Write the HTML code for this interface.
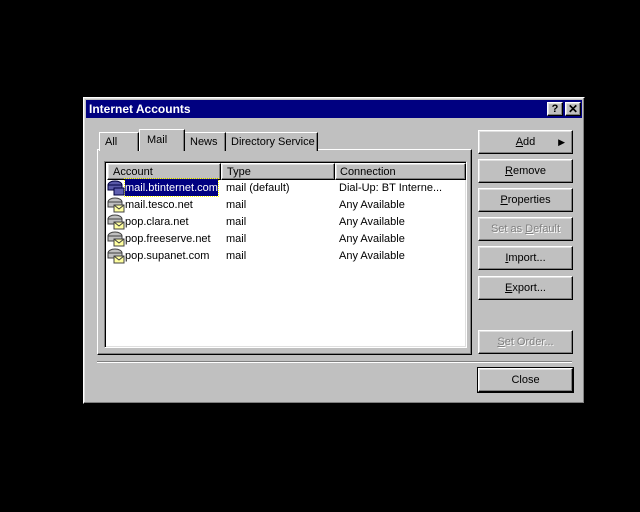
<html><head><style>
body{margin:0;width:640px;height:512px;background:#000;position:relative;overflow:hidden;font-family:"Liberation Sans",sans-serif;font-size:11px}
div{position:absolute;box-sizing:border-box}
.out{background:#c0c0c0;border:1px solid;border-color:#fff #000 #000 #fff;box-shadow:inset -1px -1px #808080,inset 1px 1px #dfdfdf}
.btn{left:478px;width:95px;height:24px;text-align:center;line-height:22px;color:#000}
.dis{color:#808080;text-shadow:1px 1px #fff}
.tab{top:132px;height:19px;background:#c0c0c0;border:1px solid;border-bottom:none;border-color:#fff #000 #000 #fff;box-shadow:inset -1px 0 #808080;line-height:18px;padding-left:5px}
.row{left:0;height:17px;line-height:18px;white-space:nowrap}
u{text-decoration:underline}
</style></head><body>
<div class="out" style="left:83px;top:97px;width:502px;height:307px"></div>
<div style="left:86px;top:100px;width:496px;height:18px;background:#000080;color:#fff;font-weight:bold;font-size:12px;line-height:18px;padding-left:3px">Internet Accounts</div>
<div class="out" style="left:547px;top:102px;width:16px;height:14px;font-weight:bold;text-align:center;line-height:12px;font-size:11px">?</div>
<div class="out" style="left:565px;top:102px;width:16px;height:14px;font-weight:bold;text-align:center;line-height:12px;font-size:12px">✕</div>
<div style="left:97px;top:149px;width:375px;height:206px;border:1px solid;border-color:#fff #000 #000 #fff;box-shadow:inset -1px -1px #808080"></div>
<div class="tab" style="left:99px;width:40px">All</div>
<div class="tab" style="left:225px;width:93px">Directory Service</div>
<div class="tab" style="left:184px;width:42px">News</div>
<div class="tab" style="left:139px;top:129px;height:22px;width:46px;padding-left:7px;line-height:20px;z-index:2">Mail</div>
<div style="left:104px;top:161px;width:363px;height:187px;background:#fff;border:1px solid;border-color:#808080 #fff #fff #808080;box-shadow:inset 1px 1px #000,inset -1px -1px #dfdfdf">
 <div class="out" style="left:2px;top:1px;width:114px;height:17px;line-height:16px;padding-left:5px">Account</div>
 <div class="out" style="left:116px;top:1px;width:114px;height:17px;line-height:16px;padding-left:5px">Type</div>
 <div class="out" style="left:230px;top:1px;width:131px;height:17px;line-height:16px;padding-left:4px">Connection</div>
</div>
<div style="left:106px;top:179px;width:359px;height:90px">
 <div class="row" style="top:0"><div style="left:19px;top:0;width:93px;height:17px;background:#000080;color:#fff;outline:1px dotted #ff0">mail.btinternet.com</div><div style="left:120px">mail (default)</div><div style="left:233px">Dial-Up: BT Interne...</div></div>
 <div class="row" style="top:17px"><div style="left:19px">mail.tesco.net</div><div style="left:120px">mail</div><div style="left:233px">Any Available</div></div>
 <div class="row" style="top:34px"><div style="left:19px">pop.clara.net</div><div style="left:120px">mail</div><div style="left:233px">Any Available</div></div>
 <div class="row" style="top:51px"><div style="left:19px">pop.freeserve.net</div><div style="left:120px">mail</div><div style="left:233px">Any Available</div></div>
 <div class="row" style="top:68px"><div style="left:19px">pop.supanet.com</div><div style="left:120px">mail</div><div style="left:233px">Any Available</div></div>
</div>
<svg style="position:absolute;left:107px;top:179px" width="18" height="86">
 <g><ellipse cx="8" cy="6" rx="7" ry="4" fill="#5a5aa8" stroke="#000040"/><rect x="1" y="6" width="14" height="5" fill="#5a5aa8" stroke="#000040"/><rect x="7" y="9" width="10" height="7" fill="#6060b0" stroke="#000040"/></g>
 <g transform="translate(0,17)"><ellipse cx="8" cy="6" rx="7" ry="4" fill="#c0c0c0" stroke="#404040"/><rect x="1" y="6" width="14" height="5" fill="#c0c0c0" stroke="#404040"/><rect x="7" y="9" width="10" height="7" fill="#ffffa0" stroke="#404040"/><path d="M7 9l5 4 5-4" fill="none" stroke="#404040"/></g>
 <g transform="translate(0,34)"><ellipse cx="8" cy="6" rx="7" ry="4" fill="#c0c0c0" stroke="#404040"/><rect x="1" y="6" width="14" height="5" fill="#c0c0c0" stroke="#404040"/><rect x="7" y="9" width="10" height="7" fill="#ffffa0" stroke="#404040"/><path d="M7 9l5 4 5-4" fill="none" stroke="#404040"/></g>
 <g transform="translate(0,51)"><ellipse cx="8" cy="6" rx="7" ry="4" fill="#c0c0c0" stroke="#404040"/><rect x="1" y="6" width="14" height="5" fill="#c0c0c0" stroke="#404040"/><rect x="7" y="9" width="10" height="7" fill="#ffffa0" stroke="#404040"/><path d="M7 9l5 4 5-4" fill="none" stroke="#404040"/></g>
 <g transform="translate(0,68)"><ellipse cx="8" cy="6" rx="7" ry="4" fill="#c0c0c0" stroke="#404040"/><rect x="1" y="6" width="14" height="5" fill="#c0c0c0" stroke="#404040"/><rect x="7" y="9" width="10" height="7" fill="#ffffa0" stroke="#404040"/><path d="M7 9l5 4 5-4" fill="none" stroke="#404040"/></g>
</svg>
<div class="out btn" style="top:130px"><u>A</u>dd<span style="position:absolute;right:7px;top:0;font-size:9px">▶</span></div>
<div class="out btn" style="top:159px"><u>R</u>emove</div>
<div class="out btn" style="top:188px"><u>P</u>roperties</div>
<div class="out btn dis" style="top:217px">Set as <u>D</u>efault</div>
<div class="out btn" style="top:246px"><u>I</u>mport...</div>
<div class="out btn" style="top:276px"><u>E</u>xport...</div>
<div class="out btn dis" style="top:330px"><u>S</u>et Order...</div>
<div style="left:97px;top:361px;width:475px;height:2px;border-top:1px solid #808080;border-bottom:1px solid #fff"></div>
<div class="out btn" style="top:368px;outline:1px solid #000">Close</div>
</body></html>
